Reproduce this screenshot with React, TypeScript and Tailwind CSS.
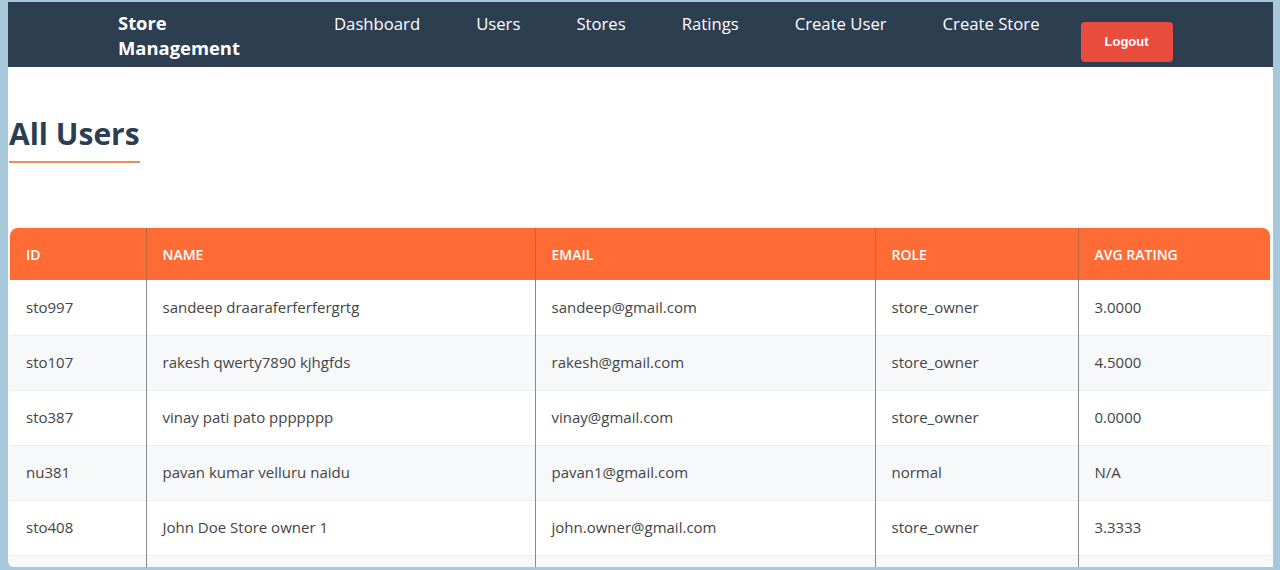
import React from "react";

interface UserRow {
  id: string;
  name: string;
  email: string;
  role: string;
  avgRating: string;
}

const users: UserRow[] = [
  { id: "sto997", name: "sandeep draaraferferfergrtg", email: "sandeep@gmail.com", role: "store_owner", avgRating: "3.0000" },
  { id: "sto107", name: "rakesh qwerty7890 kjhgfds", email: "rakesh@gmail.com", role: "store_owner", avgRating: "4.5000" },
  { id: "sto387", name: "vinay pati pato ppppppp", email: "vinay@gmail.com", role: "store_owner", avgRating: "0.0000" },
  { id: "nu381", name: "pavan kumar velluru naidu", email: "pavan1@gmail.com", role: "normal", avgRating: "N/A" },
  { id: "sto408", name: "John Doe Store owner 1", email: "john.owner@gmail.com", role: "store_owner", avgRating: "3.3333" },
];

const navLinks = ["Dashboard", "Users", "Stores", "Ratings", "Create User", "Create Store"];

const font = { fontFamily: '"Open Sans", "Noto Sans", sans-serif' };

const App = () => {
  return (
    <div className="h-[570px] overflow-hidden bg-[#a7c7db] pl-[8px] pr-[7px] pt-[2px] pb-[3px]" style={font}>
      <div className="h-full overflow-hidden rounded-bl-[6px] bg-white">
        {/* navbar */}
        <nav className="flex h-[65px] items-start bg-[#2c3e50] pl-[110px] text-white">
          <div className="w-[216px] pt-[8px] text-[18.4px] font-bold leading-[25px]">
            Store
            <br />
            Management
          </div>
          <ul className="flex gap-[56px] pt-[10px] text-[16.7px] leading-[24px]">
            {navLinks.map((link) => (
              <li key={link}>{link}</li>
            ))}
          </ul>
          <button
            className="ml-[41px] mt-[20px] h-[40px] w-[92px] rounded-[4px] bg-[#e74c3c] text-[13px] font-bold text-white"
            style={{ fontFamily: '"Liberation Sans", Arial, sans-serif' }}
          >
            Logout
          </button>
        </nav>

        {/* content */}
        <main className="pl-[1px] pr-[3px]">
          <h1 className="mt-[47px] inline-block border-b-2 border-[#f08a5d] pb-[7px] text-[30px] font-bold leading-[40px] text-[#2c3e50]">
            All Users
          </h1>

          <div className="mt-[65px] ml-[1px] overflow-hidden rounded-t-[8px] shadow-[0_0_6px_rgba(0,0,0,0.06)]">
            <table className="w-full table-fixed border-collapse text-left">
              <colgroup>
                <col className="w-[136px]" />
                <col className="w-[389px]" />
                <col className="w-[340px]" />
                <col className="w-[203px]" />
                <col />
              </colgroup>
              <thead>
                <tr className="h-[52px] bg-[#ff6b35] text-[14px] font-semibold text-white">
                  <th className="border-r border-[#b8673f] px-[16px] font-semibold">ID</th>
                  <th className="border-r border-[#b8673f] px-[16px] font-semibold">NAME</th>
                  <th className="border-r border-[#b8673f] px-[16px] font-semibold">EMAIL</th>
                  <th className="border-r border-[#b8673f] px-[16px] font-semibold">ROLE</th>
                  <th className="px-[16px] font-semibold">AVG RATING</th>
                </tr>
              </thead>
              <tbody className="text-[15px] text-[#444]">
                {users.map((u, i) => (
                  <tr
                    key={u.id}
                    className={`h-[55px] border-b border-[#eceef0] ${i % 2 === 1 ? "bg-[#f7f8fa]" : "bg-white"}`}
                  >
                    <td className="border-r border-[#8a8a8a] px-[16px]">{u.id}</td>
                    <td className="border-r border-[#8a8a8a] px-[16px]">{u.name}</td>
                    <td className="border-r border-[#8a8a8a] px-[16px]">{u.email}</td>
                    <td className="border-r border-[#8a8a8a] px-[16px]">{u.role}</td>
                    <td className="px-[16px]">{u.avgRating}</td>
                  </tr>
                ))}
                {/* next row continues below the fold */}
                <tr className="h-[55px] bg-[#f7f8fa]">
                  <td className="border-r border-[#8a8a8a]" />
                  <td className="border-r border-[#8a8a8a]" />
                  <td className="border-r border-[#8a8a8a]" />
                  <td className="border-r border-[#8a8a8a]" />
                  <td />
                </tr>
              </tbody>
            </table>
          </div>
        </main>
      </div>
    </div>
  );
};

export default App;
